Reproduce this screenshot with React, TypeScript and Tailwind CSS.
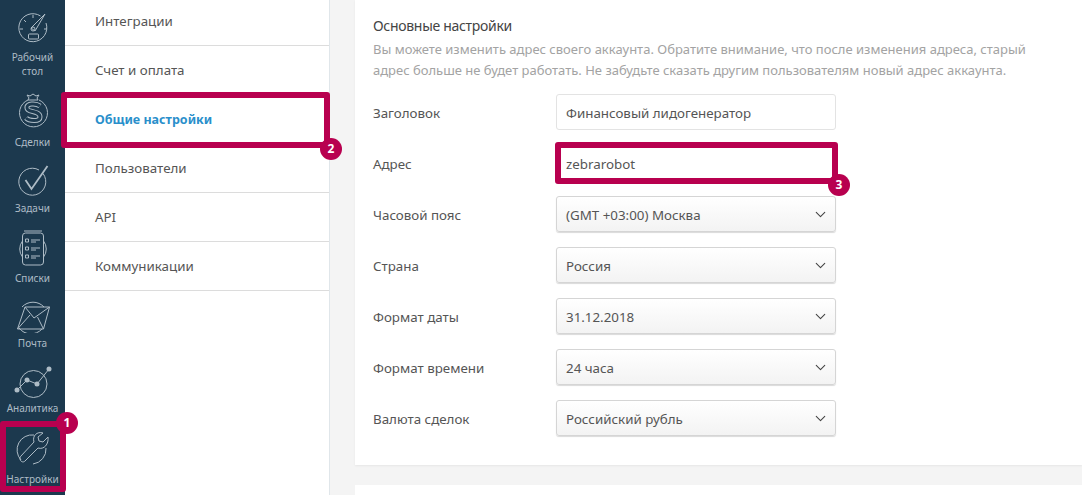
import { ChevronDown } from 'lucide-react';
import type { ReactNode } from 'react';

const stroke = '#aebcc6';
const navy = '#1c394e';

const Gauge = () => (
  <svg width="40" height="32" viewBox="0 0 40 32" fill="none" stroke={stroke} strokeWidth="1">
    <path d="M27.5 3A14 14 0 1 0 33 10" />
    <path d="M18 15 32 1 22 18z" />
    <circle cx="20" cy="16" r="2" />
    <rect x="15.5" y="21" width="10" height="5" rx="1" />
    <path d="M7 16h3M11 7l2 2M20 2v3M31 16h3" />
  </svg>
);

const Dollar = () => (
  <svg width="40" height="36" viewBox="0 0 40 36" fill="none" stroke={stroke} strokeWidth="1">
    <path d="M15 7A14 14 0 1 0 26 7" />
    <path d="M15 7l1-2-2-3 3 1 3-2 3 2 3-1-2 3 1 2z" />
    <path d="M27 13c-4-3-14-3-13 2 0 5 13 2 13 9 0 5-11 4-14 1" strokeWidth="5" />
    <path d="M27 13c-4-3-14-3-13 2 0 5 13 2 13 9 0 5-11 4-14 1" strokeWidth="3" stroke={navy} />
  </svg>
);

const Check = () => (
  <svg width="40" height="32" viewBox="0 0 40 32" fill="none" stroke={stroke}>
    <path d="M30 8.5A13.5 13.5 0 1 1 26 5" />
    <path d="M12.5 15l6 9L34.5 1" strokeWidth="1.8" />
  </svg>
);

const ListIcon = () => (
  <svg width="40" height="37" viewBox="0 0 40 37" fill="none" stroke={stroke} strokeWidth="1">
    <rect x="9.5" y="3" width="21" height="32" rx="3" />
    <path d="M11 1h18M9.5 11A13 13 0 0 0 9.5 27M30.5 11a13 13 0 0 1 0 16" />
    <path d="M12.5 9h3v3h-3zM12.5 17h3v3h-3zM12.5 25h3v3h-3z" />
    <path d="M18 10h9M18 12h5M18 18h9M18 20h5M18 26h9M18 28h5" />
  </svg>
);

const Mail = () => (
  <svg width="40" height="32" viewBox="0 0 40 32" fill="none" stroke={stroke} strokeWidth="1">
    <path d="M31 6A15 15 0 0 0 9 6" />
    <path d="M6 27A15 15 0 0 0 29 28" />
    <path d="M12 6h24.5l-6 22H4.5z" />
    <path d="M12 6l9 11L36.5 6M4.5 28 17 14M30.5 28l-6-12" />
  </svg>
);

const Chart = () => (
  <svg width="40" height="32" viewBox="0 0 40 32" fill="none" stroke={stroke} strokeWidth="1">
    <circle cx="20.5" cy="18" r="13.5" />
    <path d="M4 24 14 14l10 4 12-15" />
    <g fill={stroke} stroke="none">
      <circle cx="4" cy="24" r="2.5" />
      <circle cx="14" cy="14" r="2.5" />
      <circle cx="24" cy="18" r="2.5" />
      <circle cx="36" cy="3" r="2.5" />
    </g>
  </svg>
);

const Wrench = () => (
  <svg width="40" height="34" viewBox="0 0 40 34" fill="none" stroke={stroke} strokeWidth="1">
    <path d="M21 3A15 15 0 0 0 8 28M33 16A15 15 0 0 1 20 32" />
    <path d="M35 5l-5 5-4-1-1-4 5-4c-6-2-11 3-9 9L8 24c-3 3 1 8 4 5l13-13c6 2 11-4 10-11z" />
  </svg>
);

const sideItems: { label: ReactNode; icon: ReactNode; box: string }[] = [
  { label: <>Рабочий<br />стол</>, icon: <Gauge />, box: 'h-[88px] pt-[13px] gap-[5px]' },
  { label: 'Сделки', icon: <Dollar />, box: 'h-[61px] pt-[5px] gap-[6px]' },
  { label: 'Задачи', icon: <Check />, box: 'h-[66px] pt-[16px] gap-[4px]' },
  { label: 'Списки', icon: <ListIcon />, box: 'h-[70px] pt-[15px] gap-[4px]' },
  { label: 'Почта', icon: <Mail />, box: 'h-[65px] pt-[16px] gap-[3px]' },
  { label: 'Аналитика', icon: <Chart />, box: 'h-[65px] pt-[16px] gap-[3px]' },
  { label: 'Настройки', icon: <Wrench />, box: 'h-[71px] pt-[17px] gap-[6px]' },
];

const navItems = ['Интеграции', 'Счет и оплата', 'Общие настройки', 'Пользователи', 'API', 'Коммуникации'];

const rows = [
  { label: 'Заголовок', value: 'Финансовый лидогенератор', select: false },
  { label: 'Адрес', value: 'zebrarobot', select: false },
  { label: 'Часовой пояс', value: '(GMT +03:00) Москва', select: true },
  { label: 'Страна', value: 'Россия', select: true },
  { label: 'Формат даты', value: '31.12.2018', select: true },
  { label: 'Формат времени', value: '24 часа', select: true },
  { label: 'Валюта сделок', value: 'Российский рубль', select: true },
];

const Badge = ({ n, className }: { n: number; className: string }) => (
  <div className={`absolute w-[22px] h-[22px] rounded-full bg-[#b8004f] text-white text-[12px] font-bold flex items-center justify-center ${className}`}>
    {n}
  </div>
);

const Highlight = ({ className }: { className: string }) => (
  <div className={`absolute border-[6px] border-[#b8004f] rounded-[3px] ${className}`}></div>
);

export default function App() {
  return (
    <div className="relative w-[1082px] h-[495px] overflow-hidden flex bg-[#f4f4f4] text-[13.35px] text-[#555] font-['Noto_Sans',sans-serif]">
      <div className="w-[65px] shrink-0 flex flex-col bg-[#1c394e] text-[#aebcc6] text-[10px] leading-[14px]">
        {sideItems.map((item, i) => (
          <div key={i} className={`flex flex-col items-center text-center ${item.box}`}>
            {item.icon}
            <div>{item.label}</div>
          </div>
        ))}
      </div>

      <div className="w-[265px] shrink-0 bg-white border-r border-[#e0e6ea]">
        <div className="-mt-[3px]">
          {navItems.map((item, i) => (
            <div
              key={item}
              className={`h-[49px] pl-[30px] flex items-center border-b border-[#dcdcdc] ${i === 2 ? 'pt-[3px] font-bold text-[12.5px] text-[#2a8fcb]' : ''}`}>
              {item}
            </div>
          ))}
        </div>
      </div>

      <div className="grow pl-[25px] flex flex-col gap-[20px]">
        <div className="h-[465px] shrink-0 bg-white pl-[18px] pt-[15px] shadow-[0_1px_2px_rgba(0,0,0,0.06)]">
          <div className="text-[14px] tracking-[-0.3px] leading-[22px] text-[#444]">Основные настройки</div>
          <div className="mt-[2px] w-[690px] text-[13px] leading-[21px] text-[#a3a3a3]">
            Вы можете изменить адрес своего аккаунта. Обратите внимание, что после изменения адреса, старый адрес больше не будет работать. Не забудьте сказать другим пользователям новый адрес аккаунта.
          </div>
          <div className="mt-[13px] flex flex-col gap-[15px]">
            {rows.map((row) => (
              <div key={row.label} className="flex items-center h-[36px]">
                <div className="w-[183px] shrink-0 pt-[2px]">{row.label}</div>
                <div
                  className={`w-[280px] h-[36px] pl-[9px] pr-[6px] flex items-center justify-between rounded-[3px] border ${
                    row.select
                      ? 'border-[#d5d5d5] bg-gradient-to-b from-white to-[#f3f3f3] shadow-[0_1px_1px_rgba(0,0,0,0.15)]'
                      : 'border-[#e3e3e3] bg-white'
                  }`}>
                  <span className="pt-[2px]">{row.value}</span>
                  {row.select && <ChevronDown size={17} strokeWidth={1.5} className="text-[#444]" />}
                </div>
              </div>
            ))}
          </div>
        </div>
        <div className="grow bg-white"></div>
      </div>

      <Highlight className="left-0 top-[421px] w-[66px] h-[71px]" />
      <Badge n={1} className="left-[56px] top-[412px]" />
      <Highlight className="left-[61px] top-[92px] w-[269px] h-[56px]" />
      <Badge n={2} className="left-[320px] top-[138px]" />
      <Highlight className="left-[555px] top-[142px] w-[283px] h-[42px]" />
      <Badge n={3} className="left-[828px] top-[174px]" />
    </div>
  );
}
